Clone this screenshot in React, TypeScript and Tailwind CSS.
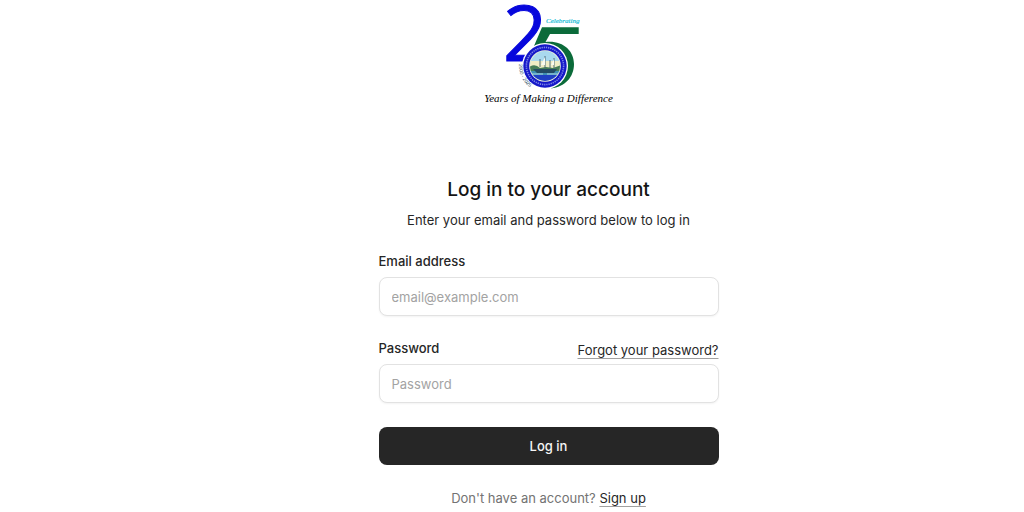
function AnniversaryLogo() {
  return (
    <svg viewBox="0 0 132 90" className="h-[90px] w-[132px]" role="img" aria-label="Celebrating 25 years">
      <defs>
        <clipPath id="seal-scene">
          <circle cx="62" cy="66" r="15" />
        </clipPath>
        <path id="years-arc" d="M36 64A26 26 0 0 0 55 91" />
      </defs>
      <text x="20" y="61" fontSize="77" fontWeight="400" fill="#0707dc" stroke="#0707dc" strokeWidth="1" fontFamily="Open Sans, sans-serif">
        2
      </text>
      <path
        d="M59 27.300H95.700V34H67L62.500 42C79 40 91 50 91 64C91 77 82 87 68 88.500C78 83 83 76 82 65C81 51 69 43 51 46Z"
        fill="#0b6b3a"
      />
      <circle cx="62" cy="66" r="23" fill="#fff" />
      <circle cx="62" cy="66" r="21.700" fill="#1418c8" />
      <circle cx="62" cy="66" r="18.600" fill="none" stroke="#7d85e6" strokeWidth="1.600" strokeDasharray="1.300 0.900" />
      <circle cx="62" cy="66" r="15.800" fill="#eef3d8" />
      <g clipPath="url(#seal-scene)">
        <path d="M46 50H78V68H46Z" fill="#a9d9ee" />
        <path d="M46 61H78V69H46Z" fill="#f0edc4" />
        <path d="M46 70H78V78H46Z" fill="#3e8fb4" />
        <path d="M46 75H78V83H46Z" fill="#1f3fc4" />
        <path d="M46 67Q52 63 57 68L63 67L70 68L78 65V71H46Z" fill="#457d56" />
        <path d="M57 67V59M62 68V56M67 68V60M71 68V58" stroke="#3f6170" strokeWidth="0.900" />
        <path d="M62 57L58 65H62ZM71 59L68 65H71Z" fill="#f9faf0" />
        <path d="M50 69H74L71 73H54Z" fill="#234b64" />
        <path d="M49 74H60M64 74H75" stroke="#b9dfe5" strokeWidth="0.900" />
      </g>
      <text fontSize="5" fill="#34566b" fontFamily="Liberation Sans, sans-serif">
        <textPath href="#years-arc">2000 - 2025</textPath>
      </text>
      <text x="63" y="23" fontSize="7" fontStyle="italic" fill="#16bdd6" stroke="#16bdd6" strokeWidth="0.200" fontFamily="Liberation Serif, serif">
        Celebrating
      </text>
    </svg>
  );
}

const fieldClass =
  "h-[39px] w-full rounded-lg border border-[#e2e2e2] bg-white px-3 text-[13px] text-[#262626] shadow-xs outline-none placeholder:text-[#a3a3a3] focus:border-neutral-400";

export default function App() {
  return (
    <main className="flex min-h-screen flex-col items-center bg-white pl-[73px] font-['Inter',sans-serif] text-[13px] leading-5 text-[#262626]">
      <div className="flex w-full max-w-[340px] flex-col">
        <header className="flex flex-col items-center text-center">
          <AnniversaryLogo />
          <p className="font-['Liberation_Serif',serif] text-[11px] leading-4 text-black italic">
            Years of Making a Difference
          </p>
          <h1 className="mt-[72px] text-[19px] leading-6 font-medium text-[#141414]">Log in to your account</h1>
          <p className="mt-2 leading-5">Enter your email and password below to log in</p>
        </header>

        <form className="mt-[23px] flex flex-col" onSubmit={(event) => event.preventDefault()}>
          <label htmlFor="email" className="leading-4 font-medium">
            Email address
          </label>
          <input id="email" type="email" placeholder="email@example.com" className={`mt-2 ${fieldClass}`} />

          <div className="mt-6 flex items-start justify-between">
            <label htmlFor="password" className="leading-4 font-medium">
              Password
            </label>
            <a href="#forgot" className="mt-0.5 leading-4 underline decoration-neutral-400 underline-offset-[3px]">
              Forgot your password?
            </a>
          </div>
          <input id="password" type="password" placeholder="Password" className={`mt-1.5 ${fieldClass}`} />

          <button type="submit" className="mt-6 h-[38px] w-full rounded-lg bg-[#262626] font-medium text-[#f5f5f5]">
            Log in
          </button>
        </form>

        <p className="mt-[23px] text-center text-[#737373]">
          Don't have an account?{" "}
          <a href="#signup" className="text-[#262626] underline decoration-neutral-400 underline-offset-[3px]">
            Sign up
          </a>
        </p>
      </div>
    </main>
  );
}
